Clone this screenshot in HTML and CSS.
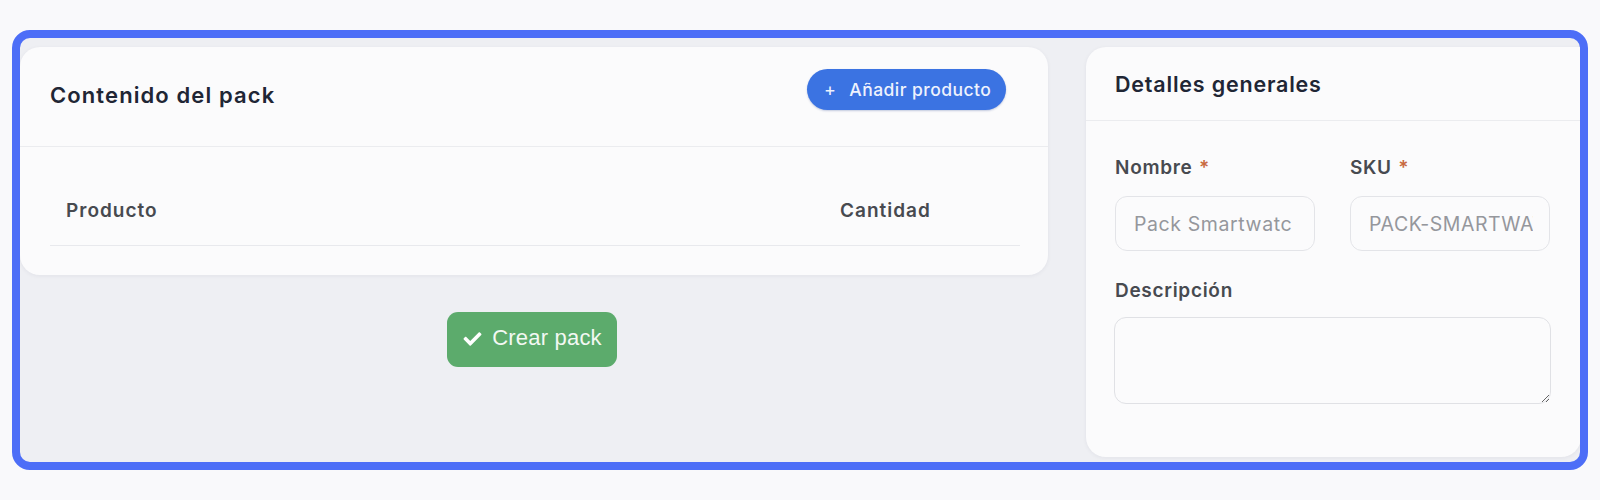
FILE: index.html
```html
<!DOCTYPE html>
<html lang="es">
<head>
<meta charset="utf-8">
<title>Crear pack</title>
<link rel="stylesheet" href="styles.css">
</head>
<body>
<div class="frame">
  <div class="layout">
    <div class="main-col">
      <section class="card pack-card">
        <header class="card-header">
          <h2 class="card-title">Contenido del pack</h2>
          <button class="btn-add" type="button"><span class="plus">+</span>Añadir producto</button>
        </header>
        <div class="pack-body">
          <table class="pack-table">
            <thead>
              <tr>
                <th class="col-product">Producto</th>
                <th class="col-qty">Cantidad</th>
              </tr>
            </thead>
          </table>
        </div>
      </section>
      <div class="actions">
        <button class="btn-create" type="button">
          <svg class="check" viewBox="0 0 512 512" aria-hidden="true"><path d="M173.9 439.4l-166.4-166.4c-10-10-10-26.2 0-36.2l36.2-36.2c10-10 26.2-10 36.2 0L192 312.7 432.1 72.6c10-10 26.2-10 36.2 0l36.2 36.2c10 10 10 26.2 0 36.2l-294.4 294.4c-10 10-26.2 10-36.2 0z"/></svg>
          Crear pack
        </button>
      </div>
    </div>
    <aside class="card details-card">
      <header class="details-header">
        <h2 class="card-title">Detalles generales</h2>
      </header>
      <div class="details-body">
        <div class="field-row">
          <div class="field">
            <label class="field-label">Nombre <span class="req">*</span></label>
            <input class="field-input field-input--name" type="text" placeholder="Pack Smartwatch">
          </div>
          <div class="field">
            <label class="field-label">SKU <span class="req">*</span></label>
            <input class="field-input field-input--code" type="text" placeholder="PACK-SMARTWATCH">
          </div>
        </div>
        <div class="field">
          <label class="field-label">Descripción</label>
          <textarea class="field-textarea"></textarea>
        </div>
      </div>
    </aside>
  </div>
</div>
</body>
</html>
```
FILE: styles.css
```css
* { box-sizing: border-box; }

html, body {
  margin: 0;
  padding: 0;
  background: #f9f9fb;
  font-family: "Inter", "Noto Sans", sans-serif;
}

body {
  padding: 30px 12px 0 12px;
}

.frame {
  width: 1576px;
  height: 440px;
  border: 8px solid #4d6ef7;
  border-radius: 18px;
  background: #eeeff3;
  overflow: hidden;
}

.layout {
  display: grid;
  grid-template-columns: 1028px 1fr;
  column-gap: 38px;
  padding-top: 9px;
  height: 100%;
}

.card {
  background: #fbfbfc;
  border-radius: 20px;
  box-shadow: 0 1px 4px rgba(30, 40, 60, 0.06);
}

.pack-card {
  height: 228px;
}

.card-header {
  height: 100px;
  display: flex;
  align-items: flex-start;
  justify-content: space-between;
  padding: 0 42px 0 30px;
  border-bottom: 1px solid #ebecef;
}

.card-title {
  margin: 0;
  font-size: 21.5px;
  font-weight: 600;
  color: #1f2635;
  letter-spacing: 0.8px;
}

.pack-card .card-title {
  margin-top: 35px;
  font-size: 22px;
  letter-spacing: 1.1px;
}

.btn-add {
  margin-top: 22px;
  height: 41px;
  width: 199px;
  border: none;
  border-radius: 22px;
  background: #3b73e2;
  color: #eef2fd;
  font-family: inherit;
  font-size: 17.5px;
  font-weight: 500;
  letter-spacing: 0.45px;
  display: flex;
  align-items: center;
  padding: 0 0 1px 17px;
  box-shadow: 0 1px 2px rgba(30, 60, 140, 0.25);
}

.plus {
  font-size: 18px;
  font-weight: 400;
  margin-right: 13px;
}

.pack-body {
  padding: 36px 28px 0 30px;
}

.pack-table {
  width: 100%;
  border-collapse: collapse;
}

.pack-table th {
  text-align: left;
  font-size: 19px;
  font-weight: 600;
  letter-spacing: 1px;
  color: #474a50;
  padding: 16px 18px 22px 16px;
  line-height: 24px;
  border-bottom: 1px solid #e8e9ed;
}

.pack-table .col-qty {
  width: 196px;
}

.actions {
  display: flex;
  justify-content: center;
  padding-top: 37px;
}

.btn-create {
  width: 170px;
  height: 55px;
  margin-left: -4px;
  border: none;
  border-radius: 11px;
  background: #5cab6c;
  color: #f3f8f3;
  font-family: "Liberation Sans", Arial, sans-serif;
  font-size: 22px;
  letter-spacing: 0.2px;
  display: flex;
  align-items: center;
  justify-content: center;
  gap: 9px;
  padding: 0 0 3px 0;
}

.check {
  width: 21px;
  height: 18px;
  fill: #ffffff;
  margin-top: 1px;
}

.details-card {
  height: 410px;
  border-radius: 20px 0 20px 20px;
}

.details-header {
  height: 74px;
  display: flex;
  align-items: center;
  padding: 0 29px 0 29px;
  border-bottom: 1px solid #ebecef;
}

.details-body {
  padding: 36px 30px 0 29px;
}

.field-row {
  display: grid;
  grid-template-columns: 200px 200px;
  column-gap: 35px;
  margin-bottom: 29px;
}

.field {
  display: flex;
  flex-direction: column;
}

.field-label {
  font-size: 19px;
  font-weight: 600;
  letter-spacing: 0.7px;
  color: #474a50;
  line-height: 22px;
  margin-bottom: 16px;
}

.field-row .field-label {
  margin-bottom: 17px;
}

.req {
  color: #c8693f;
  margin-left: 1px;
}

.field-input {
  width: 200px;
  height: 55px;
  border: 1px solid #e3e4e8;
  border-radius: 12px;
  background: #fbfbfc;
  padding: 0 20px 0 18px;
  font-family: inherit;
  font-size: 19.5px;
  letter-spacing: 0.6px;
  color: #8f9196;
  outline: none;
}

.field-input--name {
  padding-right: 22px;
}

.field-input--code {
  padding-right: 16px;
  letter-spacing: 0.55px;
}

.field-input::placeholder {
  color: #95979c;
}

.field-textarea {
  width: 437px;
  height: 87px;
  margin-left: -1px;
  margin-top: -1px;
  border: 1px solid #e0e1e5;
  border-radius: 12px;
  background: #fbfbfc;
  font-family: inherit;
  resize: vertical;
  outline: none;
}
```
